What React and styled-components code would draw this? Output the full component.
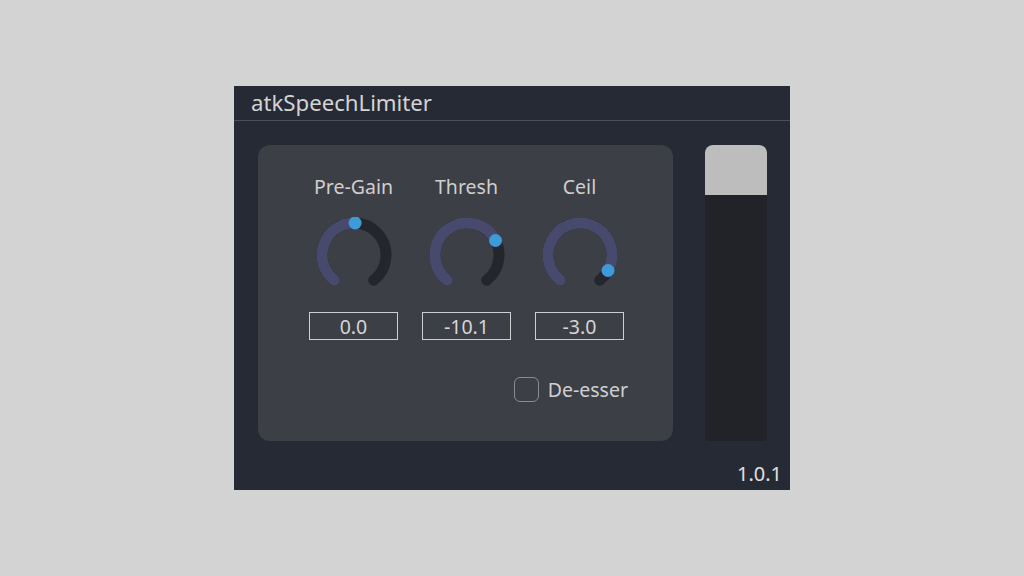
import React from 'react';
import styled, { createGlobalStyle } from 'styled-components';

const Global = createGlobalStyle`
  html, body { margin: 0; padding: 0; }
  body {
    background: #d3d3d3;
    font-family: "Noto Sans", "Open Sans", sans-serif;
  }
`;

const Page = styled.div`
  width: 1024px;
  height: 576px;
  display: flex;
  align-items: center;
  justify-content: center;
`;

const Window = styled.div`
  width: 556px;
  height: 404px;
  background: #262a35;
  display: flex;
  flex-direction: column;
  color: #d2d2d2;
`;

const TitleBar = styled.div`
  height: 35px;
  box-sizing: border-box;
  padding-left: 17px;
  padding-bottom: 1px;
  display: flex;
  align-items: center;
  font-size: 22.2px;
  border-bottom: 1px solid #4a4e5a;
  color: #d4d4d4;
`;

const Body = styled.div`
  flex: 1;
  display: flex;
  flex-direction: column;
  padding: 24px 23px 0 24px;
`;

const Main = styled.div`
  display: flex;
  gap: 32px;
  height: 296px;
`;

const Panel = styled.div`
  width: 415px;
  background: #3c3f45;
  border-radius: 12px;
  box-sizing: border-box;
  padding: 32px 49px 0 51px;
  display: flex;
  flex-direction: column;
`;

const Knobs = styled.div`
  display: grid;
  grid-template-columns: repeat(3, 89px);
  gap: 24px;
`;

const Column = styled.div`
  display: flex;
  flex-direction: column;
  align-items: center;
`;

const Label = styled.div`
  font-size: 19.5px;
  line-height: 20px;
  height: 20px;
  color: #cfcfcf;
  white-space: nowrap;
`;

const KnobSvg = styled.svg`
  width: 76px;
  height: 76px;
  margin-top: 20px;
`;

const ValueBox = styled.div`
  margin-top: 19px;
  width: 89px;
  height: 28px;
  box-sizing: border-box;
  border: 1.5px solid #cfcfcf;
  display: flex;
  align-items: center;
  justify-content: center;
  font-size: 19.5px;
  color: #d6d6d6;
`;

const CheckRow = styled.label`
  margin-top: 36px;
  margin-right: -4px;
  display: flex;
  justify-content: flex-end;
  align-items: center;
  gap: 9px;
  font-size: 19.5px;
  color: #d0d0d0;
`;

const Box = styled.span`
  width: 25px;
  height: 25px;
  box-sizing: border-box;
  border: 1.5px solid #8a8c90;
  border-radius: 6px;
`;

const Slider = styled.div`
  width: 62px;
  display: flex;
  flex-direction: column;
  background: #222328;
  border-radius: 8px 8px 3px 3px;
`;

const Thumb = styled.div`
  height: 50px;
  background: #bdbdbd;
  border-radius: 8px 8px 0 0;
`;

const Footer = styled.div`
  flex: 1;
  display: flex;
  justify-content: flex-end;
  align-items: flex-end;
  padding: 0 0 3px 0;
  margin-right: -15px;
  font-size: 20px;
  color: #e0e0e0;
`;

const pt = (a, r) => {
  const rad = (a * Math.PI) / 180;
  return [38 + r * Math.sin(rad), 38 - r * Math.cos(rad)];
};

const arc = (a0, a1, r) => {
  const [x0, y0] = pt(a0, r);
  const [x1, y1] = pt(a1, r);
  const large = a1 - a0 > 180 ? 1 : 0;
  return `M ${x0} ${y0} A ${r} ${r} 0 ${large} 1 ${x1} ${y1}`;
};

const START = -142;
const END = 142;

function Knob({ angle }) {
  const [dx, dy] = pt(angle, 32);
  return (
    <KnobSvg viewBox="0 0 76 76">
      <path d={arc(START, END, 32)} fill="none" stroke="#24262e" strokeWidth="11" strokeLinecap="round" />
      <path d={arc(START, angle, 32)} fill="none" stroke="#474a6d" strokeWidth="11" strokeLinecap="round" />
      <circle cx={dx} cy={dy} r="6.5" fill="#3f9bd8" />
    </KnobSvg>
  );
}

const params = [
  { name: 'Pre-Gain', angle: 2, value: '0.0' },
  { name: 'Thresh', angle: 63, value: '-10.1' },
  { name: 'Ceil', angle: 119, value: '-3.0' },
];

export default function App() {
  return (
    <Page>
      <Global />
      <Window>
        <TitleBar>atkSpeechLimiter</TitleBar>
        <Body>
          <Main>
            <Panel>
              <Knobs>
                {params.map((p) => (
                  <Column key={p.name}>
                    <Label>{p.name}</Label>
                    <Knob angle={p.angle} />
                    <ValueBox>{p.value}</ValueBox>
                  </Column>
                ))}
              </Knobs>
              <CheckRow>
                <Box />
                De-esser
              </CheckRow>
            </Panel>
            <Slider>
              <Thumb />
            </Slider>
          </Main>
          <Footer>1.0.1</Footer>
        </Body>
      </Window>
    </Page>
  );
}
